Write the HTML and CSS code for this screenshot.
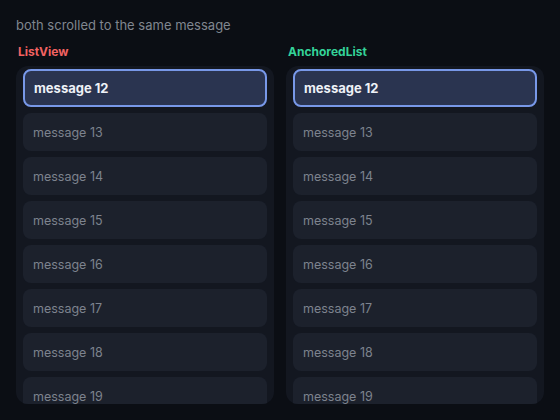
FILE: index.html
```html
<!DOCTYPE html>
<html>
<head>
<meta charset="utf-8">
<link rel="stylesheet" href="styles.css">
</head>
<body>
<p class="title">both scrolled to the same message</p>
<div class="cols">
  <section class="col">
    <h2 class="label red">ListView</h2>
    <div class="panel">
      <div class="item sel">message 12</div>
      <div class="item">message 13</div>
      <div class="item">message 14</div>
      <div class="item">message 15</div>
      <div class="item">message 16</div>
      <div class="item">message 17</div>
      <div class="item">message 18</div>
      <div class="item">message 19</div>
    </div>
  </section>
  <section class="col">
    <h2 class="label green">AnchoredList</h2>
    <div class="panel">
      <div class="item sel">message 12</div>
      <div class="item">message 13</div>
      <div class="item">message 14</div>
      <div class="item">message 15</div>
      <div class="item">message 16</div>
      <div class="item">message 17</div>
      <div class="item">message 18</div>
      <div class="item">message 19</div>
    </div>
  </section>
</div>
</body>
</html>
```
FILE: styles.css
```css
* { box-sizing: border-box; }
html, body { margin: 0; background: #0b0e14; }
body {
  font-family: Inter, "Noto Sans", sans-serif;
  padding: 15px 16px 0 16px;
  height: 420px;
  overflow: hidden;
}
.title {
  margin: 0;
  font-size: 13px;
  line-height: 20px;
  color: #80868f;
}
.cols {
  display: grid;
  grid-template-columns: 258px 258px;
  gap: 12px;
  margin-top: 9px;
}
.label {
  margin: 0 0 6px 2px;
  font-size: 12px;
  line-height: 16px;
  font-weight: 700;
}
.red { color: #f26262; }
.green { color: #34d399; }
.panel {
  background: #131720;
  border-radius: 12px;
  height: 338px;
  overflow: hidden;
  padding: 3px 7px 0 7px;
  display: flex;
  flex-direction: column;
  gap: 6px;
}
.item {
  flex: none;
  height: 38px;
  border-radius: 8px;
  background: #1c212c;
  color: #7d838e;
  font-size: 12.5px;
  display: flex;
  align-items: center;
  padding-left: 9px;
  border: 1.5px solid transparent;
}
.item.sel {
  background: #2a3450;
  border: 2px solid #7898e8;
  color: #eef1f7;
  font-weight: 700;
  font-size: 13px;
  padding-left: 9px;
}
```
